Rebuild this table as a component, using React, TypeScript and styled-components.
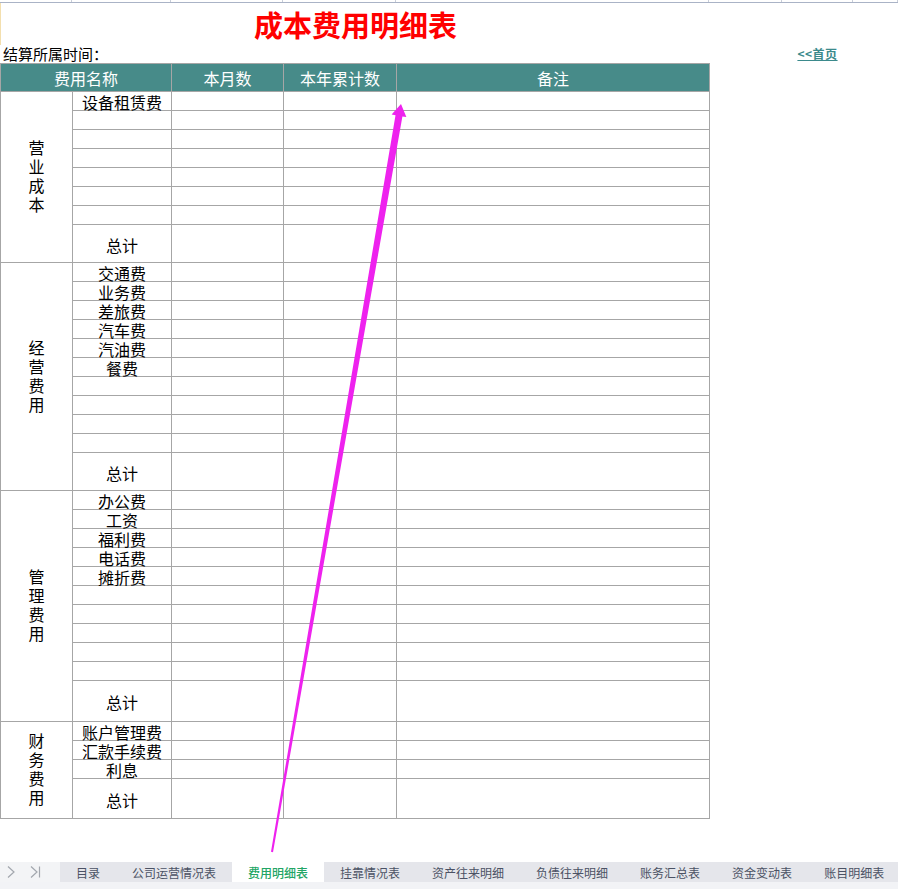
import React from "react";
import styled, { createGlobalStyle } from "styled-components";

const GlobalStyle = createGlobalStyle`
  html, body { margin: 0; padding: 0; background: #ffffff; }
  body { font-family: "Noto Sans CJK SC", "Noto Sans", sans-serif; color: #000; }
  * { box-sizing: border-box; }
`;

const Page = styled.div`
  position: relative;
  width: 898px;
  height: 100vh;
  display: flex;
  flex-direction: column;
  overflow: hidden;
`;

const TopStrip = styled.div`
  display: grid;
  grid-template-columns: 72px 99px 112px 113px 313px 73px 71px 45px;
  height: 3px;
  flex-shrink: 0;
  border-bottom: 1px solid #aab3c6;
`;

const StripCell = styled.div`
  border-right: 1px solid #c9ced9;
`;

const TitleRow = styled.div`
  width: 710px;
  height: 42px;
  flex-shrink: 0;
  display: flex;
  align-items: center;
  justify-content: center;
  border-left: 1px solid #f3dfae;
`;

const Title = styled.h1`
  margin: 0;
  font-size: 29px;
  line-height: 42px;
  font-weight: 700;
  color: #ff0000;
`;

const InfoRow = styled.div`
  display: grid;
  grid-template-columns: 782px 71px;
  height: 18px;
  flex-shrink: 0;
  align-items: center;
`;

const InfoLabel = styled.div`
  padding-left: 3px;
  font-size: 15px;
  line-height: 18px;
`;

const HomeLink = styled.a`
  justify-self: center;
  font-size: 12px;
  line-height: 14px;
  font-weight: 700;
  color: #3b8a8c;
  text-decoration: underline;
  letter-spacing: 0.5px;
  cursor: pointer;
`;

const Sheet = styled.div`
  width: 710px;
  flex-shrink: 0;
  border-top: 1px solid #a6a6a6;
  border-left: 1px solid #a6a6a6;
`;

const HeaderRow = styled.div`
  display: grid;
  grid-template-columns: 171px 112px 113px 313px;
  height: 28px;
  background: #478b89;
`;

const HeaderCell = styled.div`
  display: flex;
  align-items: center;
  justify-content: center;
  color: #ffffff;
  font-size: 16px;
  line-height: 18px;
  border-right: 1px solid #a6a6a6;
  border-bottom: 1px solid #a6a6a6;
`;

const Section = styled.div`
  display: flex;
`;

const Category = styled.div`
  width: 72px;
  display: flex;
  align-items: center;
  justify-content: center;
  border-right: 1px solid #a6a6a6;
  border-bottom: 1px solid #a6a6a6;
`;

const VerticalText = styled.span`
  writing-mode: vertical-rl;
  text-orientation: upright;
  font-size: 16px;
  line-height: 16px;
  letter-spacing: 3px;
  margin-top: 2px;
`;

const Rows = styled.div`
  display: flex;
  flex-direction: column;
`;

const Row = styled.div<{ $h: number }>`
  display: grid;
  grid-template-columns: 99px 112px 113px 313px;
  grid-template-rows: 100%;
  height: ${(p) => p.$h}px;
  min-height: 0;
  flex-shrink: 0;
`;

const Cell = styled.div`
  min-height: 0;
  border-right: 1px solid #a6a6a6;
  border-bottom: 1px solid #a6a6a6;
`;

const ItemCell = styled(Cell)`
  display: flex;
  align-items: center;
  justify-content: center;
  font-size: 16px;
  line-height: 16px;
  padding-top: 2px;
  white-space: nowrap;
`;

const Spacer = styled.div`
  flex: 1;
`;

const TabBar = styled.div`
  display: flex;
  height: 20px;
  flex-shrink: 0;
  overflow: hidden;
  background: #e5e6eb;
`;

const TabNav = styled.div`
  width: 60px;
  flex-shrink: 0;
  display: flex;
  align-items: center;
  gap: 13px;
  padding-left: 6px;
  background: #f3f4f6;
`;

const Tab = styled.div<{ $active?: boolean }>`
  flex-shrink: 0;
  padding: 0 16px;
  display: flex;
  align-items: center;
  font-size: 12px;
  white-space: nowrap;
  color: ${(p) => (p.$active ? "#22a565" : "#4b5264")};
  background: ${(p) => (p.$active ? "#ffffff" : "transparent")};
  font-weight: ${(p) => (p.$active ? 500 : 400)};
`;

const TabFooter = styled.div`
  height: 7px;
  flex-shrink: 0;
  background: #f2f3f6;
`;

const ArrowOverlay = styled.svg`
  position: absolute;
  left: 0;
  top: 0;
  width: 898px;
  height: 889px;
  pointer-events: none;
`;

type SectionData = { name: string; items: string[]; totalH: number };

const sections: SectionData[] = [
  { name: "营业成本", items: ["设备租赁费", "", "", "", "", "", ""], totalH: 38 },
  {
    name: "经营费用",
    items: ["交通费", "业务费", "差旅费", "汽车费", "汽油费", "餐费", "", "", "", ""],
    totalH: 38,
  },
  {
    name: "管理费用",
    items: ["办公费", "工资", "福利费", "电话费", "摊折费", "", "", "", "", ""],
    totalH: 41,
  },
  { name: "财务费用", items: ["账户管理费", "汇款手续费", "利息"], totalH: 40 },
];

const tabs = [
  "目录",
  "公司运营情况表",
  "费用明细表",
  "挂靠情况表",
  "资产往来明细",
  "负债往来明细",
  "账务汇总表",
  "资金变动表",
  "账目明细表",
];

const DataRow: React.FC<{ label: string; h: number }> = ({ label, h }) => (
  <Row $h={h}>
    <ItemCell>{label}</ItemCell>
    <Cell />
    <Cell />
    <Cell />
  </Row>
);

export default function App() {
  return (
    <>
      <GlobalStyle />
      <Page>
        <TopStrip>
          {Array.from({ length: 8 }).map((_, i) => (
            <StripCell key={i} />
          ))}
        </TopStrip>
        <TitleRow>
          <Title>成本费用明细表</Title>
        </TitleRow>
        <InfoRow>
          <InfoLabel>结算所属时间：</InfoLabel>
          <HomeLink>&lt;&lt;首页</HomeLink>
        </InfoRow>
        <Sheet>
          <HeaderRow>
            <HeaderCell>费用名称</HeaderCell>
            <HeaderCell>本月数</HeaderCell>
            <HeaderCell>本年累计数</HeaderCell>
            <HeaderCell>备注</HeaderCell>
          </HeaderRow>
          {sections.map((s) => (
            <Section key={s.name}>
              <Category>
                <VerticalText>{s.name}</VerticalText>
              </Category>
              <Rows>
                {s.items.map((it, i) => (
                  <DataRow key={i} label={it} h={19} />
                ))}
                <DataRow label="总计" h={s.totalH} />
              </Rows>
            </Section>
          ))}
        </Sheet>
        <Spacer />
        <TabBar>
          <TabNav>
            <svg width="10" height="14" viewBox="0 0 10 14">
              <polyline points="2,1.5 8,7 2,12.5" fill="none" stroke="#a3a7ae" strokeWidth="1.2" />
            </svg>
            <svg width="12" height="14" viewBox="0 0 12 14">
              <polyline points="2,1.5 8,7 2,12.5" fill="none" stroke="#a3a7ae" strokeWidth="1.2" />
              <line x1="10.5" y1="1.5" x2="10.5" y2="12.5" stroke="#a3a7ae" strokeWidth="1.2" />
            </svg>
          </TabNav>
          {tabs.map((t) => (
            <Tab key={t} $active={t === "费用明细表"}>
              {t}
            </Tab>
          ))}
        </TabBar>
        <TabFooter />
        <ArrowOverlay viewBox="0 0 898 889">
          <polygon
            points="271,851.8 395.5,115.2 391.6,114.5 401,104 406.35,117.1 402.4,116.4 273,852.2"
            fill="#ee22ee"
          />
        </ArrowOverlay>
      </Page>
    </>
  );
}
